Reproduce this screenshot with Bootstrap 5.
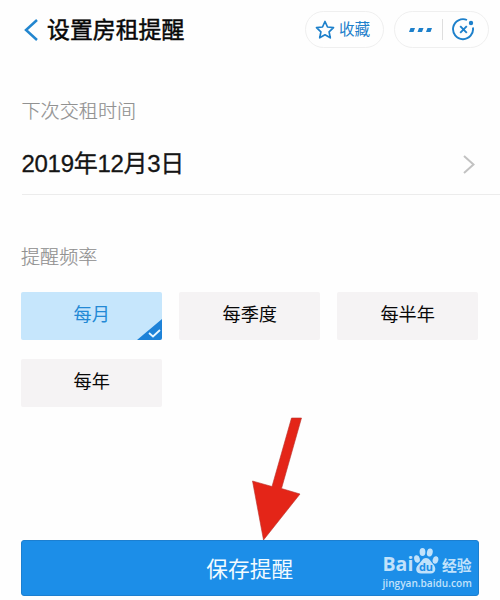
<!DOCTYPE html>
<html lang="zh-CN">
<head>
<meta charset="utf-8">
<meta name="viewport" content="width=device-width, initial-scale=1">
<title>设置房租提醒</title>
<link href="https://cdn.jsdelivr.net/npm/bootstrap@5.3.0/dist/css/bootstrap.min.css" rel="stylesheet">
<style>
body{width:500px;height:600px;overflow:hidden;background:#fefefe;font-family:"Liberation Sans","Noto Sans CJK SC",sans-serif;color:#080808}
svg{display:block;flex:none}
.topbar{height:59px;padding:0 11px 0 24px}
.page-title{font-size:22.9px;line-height:34px;margin-left:9px;-webkit-text-stroke:.5px #080808}
.pill{height:37px;border:1px solid #efefef;color:#1d80cb}
.pill-fav{width:79px;padding-left:9px;gap:4px;font-size:15.6px}
.pill-menu{width:95px;margin-left:10px;padding:0 13px 0 14px}
.sep{width:1px;height:21px;background:#dedede}
.section-label{font-size:19.1px;line-height:28px;color:#919191;font-weight:300;-webkit-text-stroke:.2px #919191}
.date-section{padding:39px 0 0 21.5px}
.date-row{height:69px;padding:8px 25px 0 0;border-bottom:1px solid #ececec}
.date-text{font:24px/36px "Liberation Sans","Noto Sans CJK SC",sans-serif;letter-spacing:-.3px;-webkit-text-stroke:.3px #151515;color:#151515}
.freq-section{padding:49px 21.5px 0 21px}
.freq-section .section-label{margin-bottom:20px}
.freq-row{--bs-gutter-x:16.5px}
.freq-row>*{margin-top:0;margin-bottom:19px}
.choice{display:block;height:48px;border:0;padding:0;font-size:18.2px;background:#f5f3f4;color:#080808;border-radius:2px}
.choice.on{background:#c6e6fc;color:#2389d5}
.corner{right:0;bottom:0}
.save-area{padding:114px 21.5px 0 21px}
.save{height:56px;border:1px solid #1c7fd0;border-radius:3px;background:#1c8ee8;color:#f2fbff;font-size:21.7px;padding:4px 0 0}
.pointer{left:250px;top:416px}
.brand{right:28.5px;bottom:10px;width:89px;color:#c1e2fb}
.brand-name{height:30px}
.brand-latin{font:bold 19.5px/19px "Open Sans","Noto Sans",sans-serif;padding-bottom:4px}
.brand-paw{margin-bottom:2px}
.brand-cn{font-size:14.8px;font-weight:bold;line-height:19px;padding-bottom:1px}
.brand-url{font:600 10.1px/13px "Open Sans","Noto Sans",sans-serif}
</style>
<script src="https://cdn.jsdelivr.net/npm/bootstrap@5.3.0/dist/js/bootstrap.bundle.min.js"></script>
</head>
<body class="position-relative">
<header class="topbar d-flex align-items-center">
  <svg width="14" height="24" viewBox="0 0 14 24" fill="none" stroke="#2286cf" stroke-width="2.5"><path d="M13 2 2 12l11 10"/></svg>
  <h1 class="page-title fw-normal mb-0 me-auto text-nowrap">设置房租提醒</h1>
  <div class="pill pill-fav rounded-pill d-flex align-items-center text-nowrap">
    <svg width="20" height="20" viewBox="0 0 20 20" fill="none" stroke="currentColor" stroke-width="1.7" stroke-linejoin="round"><path d="m10 1.500 2.500 5.500 6 .7-4.400 4.100 1.200 6-5.300-3-5.300 3 1.200-6L1.500 7.700l6-.7z"/></svg>
    <span>收藏</span>
  </div>
  <div class="pill pill-menu rounded-pill d-flex align-items-center">
    <svg width="23" height="6" viewBox="0 0 23 6" fill="currentColor"><path d="M1.500 1H6L4.500 5H0zM10 1h4.500L13 5H8.500zM18.500 1H23l-1.500 4H17z"/></svg>
    <span class="sep ms-auto me-2"></span>
    <svg width="24" height="23" viewBox="0 0 24 23" fill="none" stroke="currentColor" stroke-width="1.900"><path d="M16 2A10 10 0 1 0 21.900 9.500M9.200 8.200l6.600 6.600m0-6.600-6.600 6.600"/><circle cx="20" cy="5" r="2.200" fill="currentColor" stroke="none"/></svg>
  </div>
</header>
<main>
  <section class="date-section">
    <div class="section-label">下次交租时间</div>
    <div class="date-row d-flex align-items-center justify-content-between">
      <span class="date-text">2019年12月3日</span>
      <svg width="12" height="19" viewBox="0 0 12 19" fill="none" stroke="#c2c2c2" stroke-width="2"><path d="m1 1 9.500 8.500L1 18"/></svg>
    </div>
  </section>
  <section class="freq-section">
    <div class="section-label">提醒频率</div>
    <div class="row freq-row">
      <div class="col-4"><button class="btn choice on w-100 position-relative">每月
        <svg class="corner position-absolute" width="25" height="21" viewBox="0 0 25 21"><path d="M25 0v19q0 2-2 2H0z" fill="#1d82d8"/><path d="m12 14 4 3.500 7-6.500" fill="none" stroke="#e8f6ff" stroke-width="1.800"/></svg>
      </button></div>
      <div class="col-4"><button class="btn choice w-100">每季度</button></div>
      <div class="col-4"><button class="btn choice w-100">每半年</button></div>
      <div class="col-4"><button class="btn choice w-100">每年</button></div>
    </div>
  </section>
  <div class="save-area"><button class="btn save w-100">保存提醒</button></div>
</main>
<svg class="pointer position-absolute" width="54" height="126" viewBox="0 0 54 126"><path d="M41.500 2H51.500L31.500 72.500 50 78 13.500 124 2.500 65 22 70.500z" fill="#e42518" stroke="#b8332b" stroke-width=".6"/></svg>
<div class="brand position-absolute">
  <div class="brand-name d-flex align-items-end">
    <span class="brand-latin">Bai</span>
    <svg class="brand-paw" width="26" height="28" viewBox="0 0 26 28" fill="currentColor"><ellipse cx="4" cy="12" rx="2.800" ry="3.800" transform="rotate(-15 4 12)"/><ellipse cx="9.500" cy="5" rx="2.900" ry="4"/><ellipse cx="16.800" cy="5.500" rx="2.900" ry="4" transform="rotate(12 16.800 5.500)"/><ellipse cx="22.500" cy="13" rx="2.800" ry="3.800" transform="rotate(15 22.500 13)"/><path d="M13 11c3.500 0 4.500 3.500 7 6 4 4 2.500 9.500-2 9.500H8c-5 0-6.500-5-2.500-9 3-3 4-6.500 7.500-6.500z"/><text x="13" y="24" text-anchor="middle" font-family="Open Sans,sans-serif" font-size="11" font-weight="700" fill="#1c8ee8">du</text></svg>
    <span class="brand-cn ms-auto text-nowrap">经验</span>
  </div>
  <div class="brand-url">jingyan.baidu.com</div>
</div>
</body>
</html>
